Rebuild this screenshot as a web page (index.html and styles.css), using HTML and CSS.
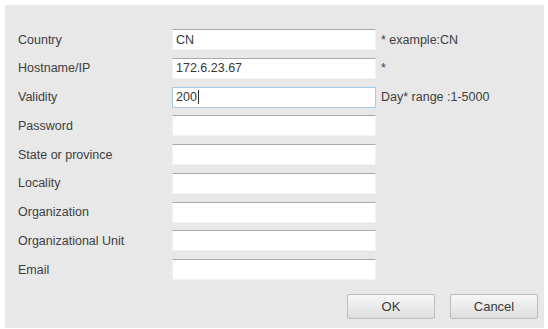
FILE: index.html
```html
<!DOCTYPE html>
<html lang="en">
<head>
  <meta charset="UTF-8">
  <title>Certificate</title>
  <link rel="stylesheet" href="styles.css">
</head>
<body>
  <div class="dialog">
    <div class="form">
      <label>Country</label>
      <input class="field" type="text" value="CN">
      <span class="hint">* example:CN</span>

      <label>Hostname/IP</label>
      <input class="field" type="text" value="172.6.23.67">
      <span class="hint">*</span>

      <label>Validity</label>
      <div class="field focused">200<span class="caret"></span></div>
      <span class="hint">Day* range :1-5000</span>

      <label>Password</label>
      <input class="field" type="password">
      <span class="hint"></span>

      <label>State or province</label>
      <input class="field" type="text">
      <span class="hint"></span>

      <label>Locality</label>
      <input class="field" type="text">
      <span class="hint"></span>

      <label>Organization</label>
      <input class="field" type="text">
      <span class="hint"></span>

      <label>Organizational Unit</label>
      <input class="field" type="text">
      <span class="hint"></span>

      <label>Email</label>
      <input class="field" type="text">
      <span class="hint"></span>
    </div>
    <div class="actions">
      <button class="btn">OK</button>
      <button class="btn">Cancel</button>
    </div>
  </div>
</body>
</html>
```

FILE: styles.css
```css
/* General Styles */
body {
  margin: 0;
  background: #ffffff;
  font-family: "Liberation Sans", Arial, sans-serif;
  font-size: 12.5px;
  color: #404040;
}
.dialog {
  margin: 5px;
  width: 539px;
  height: 323px;
  box-sizing: border-box;
  background: #e8e8e8;
  padding: 24px 6px 0 13px;
}
/* Form rows */
.form {
  display: grid;
  grid-template-columns: 154px 204px auto;
  grid-auto-rows: 21px;
  row-gap: 7.75px;
  align-items: center;
}
.form label {
  color: #404040;
}
.field {
  box-sizing: border-box;
  width: 204px;
  height: 21px;
  margin: 0;
  padding: 0 0 0 3px;
  border: 1px solid #f2f2f2;
  border-top: 1px solid #a9a9a9;
  background: #ffffff;
  font-family: inherit;
  font-size: 12.5px;
  color: #383838;
  outline: none;
}
div.field {
  display: flex;
  align-items: center;
}
.field.focused {
  border: 1px solid #a8cbe6;
}
.caret {
  display: inline-block;
  width: 1px;
  height: 14px;
  margin-left: 1px;
  background: #333;
}
.hint {
  padding-left: 5px;
  color: #404040;
}
/* Buttons */
.actions {
  display: flex;
  justify-content: flex-end;
  gap: 15px;
  margin-top: 13.5px;
}
.btn {
  width: 88px;
  height: 25px;
  border: 1px solid #bdbdbd;
  border-radius: 2px;
  background: linear-gradient(#f7f7f7, #dedede);
  font-family: inherit;
  font-size: 13px;
  color: #3a3a3a;
  padding: 0;
}
```
